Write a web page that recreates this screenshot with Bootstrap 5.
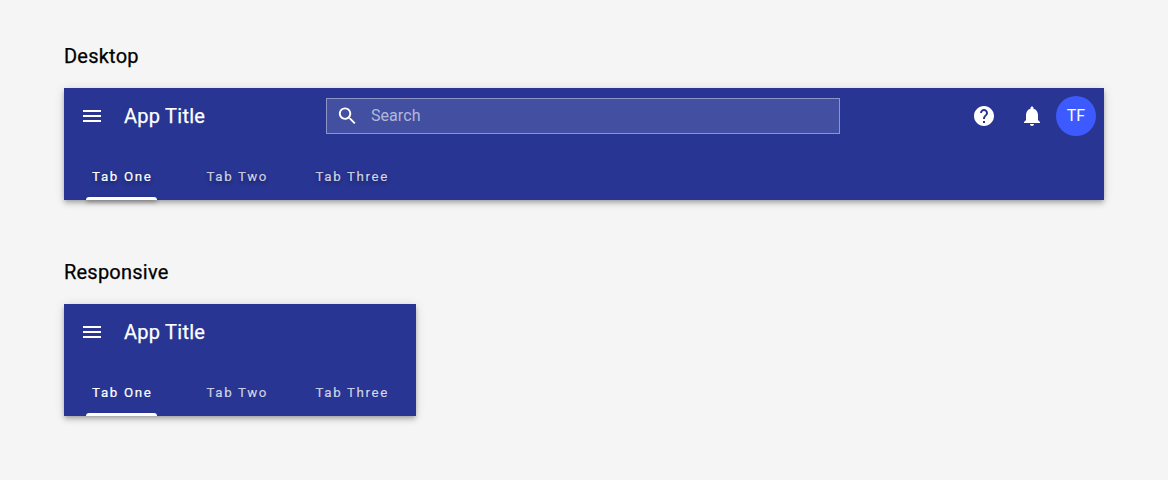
<!DOCTYPE html>
<html lang="en">
<head>
<meta charset="utf-8">
<title>App bars</title>
<link href="https://cdn.jsdelivr.net/npm/bootstrap@5.3.0/dist/css/bootstrap.min.css" rel="stylesheet">
<style>
body { background: #f5f5f5; font-family: Roboto, "Liberation Sans", sans-serif; padding: 40px 64px 0; }
.demo-heading { font-size: 20px; font-weight: 400; -webkit-text-stroke: .25px #000; letter-spacing: .22px; line-height: 32px; margin: 0 0 16px; color: #000; }
.app-bar { background: #283593; color: #fff; box-shadow: 0 2px 4px -1px rgba(0,0,0,.2), 0 4px 5px 0 rgba(0,0,0,.14), 0 1px 10px 0 rgba(0,0,0,.12); margin-bottom: 56px; }
.app-bar-narrow { width: 352px; }
.bar-row { height: 56px; padding: 0 8px 0 4px; }
.bar-left { width: 258px; }
.icon-btn { width: 48px; height: 48px; padding: 0; border: 0; background: none; color: #fff; }
.icon-btn svg, .search-box svg { width: 24px; height: 24px; fill: currentColor; display: block; }
.app-name { font-size: 20px; font-weight: 400; -webkit-text-stroke: .25px #fff; letter-spacing: .25px; margin-left: 8px; line-height: 1; }
.search-box { width: 514px; height: 36px; background: rgba(255,255,255,.13); border: 1px solid rgba(255,255,255,.4); padding-left: 9px; color: #fff; }
.search-field, .search-field:focus { background: none; border: 0; border-radius: 0; box-shadow: none; color: #fff; font-size: 16px; letter-spacing: .1px; padding: 0 0 2px 12px; height: 34px; }
.search-field::placeholder { color: rgba(255,255,255,.6); opacity: 1; }
.user-chip { width: 40px; height: 40px; background: #3d5afe; font-size: 16px; }
.tab-row { height: 56px; }
.tab-cell { width: 115px; height: 56px; color: rgba(255,255,255,.74); text-decoration: none; font-size: 13.3px; font-weight: 400; letter-spacing: 1.65px; -webkit-text-stroke: .2px currentColor; }
.tab-cell:hover { color: #fff; }
.tab-cell.is-active { color: #fff; }
.tab-label { display: inline-block; padding: 0 4.5px 0 6px; height: 56px; line-height: 65px; position: relative; }
.tab-cell.is-active .tab-label::after { content: ""; position: absolute; left: 0; right: 0; bottom: 0; height: 3px; background: #fff; border-radius: 3px 3px 0 0; }
.tabs-shaded .tab-label { text-shadow: 0 2px 4px rgba(0,0,0,.4); }
.tabs-shaded .is-active .tab-label::after { box-shadow: 0 2px 4px rgba(0,0,0,.35); }
</style>
</head>
<body>
<h2 class="demo-heading">Desktop</h2>
<header class="app-bar">
  <div class="bar-row d-flex align-items-center">
    <div class="bar-left d-flex align-items-center">
      <button class="icon-btn d-flex align-items-center justify-content-center" aria-label="Menu"><svg viewBox="0 0 24 24"><path d="M3 18h18v-2H3v2zm0-5h18v-2H3v2zm0-7v2h18V6H3z"/></svg></button>
      <span class="app-name">App Title</span>
    </div>
    <div class="search-box d-flex align-items-center">
      <svg viewBox="0 0 24 24"><path d="M15.5 14h-.79l-.28-.27C15.41 12.59 16 11.11 16 9.5 16 5.91 13.09 3 9.5 3S3 5.91 3 9.5 5.91 16 9.5 16c1.61 0 3.09-.59 4.23-1.57l.27.28v.79l5 4.99L20.49 19l-4.99-5zm-6 0C7.01 14 5 11.99 5 9.5S7.01 5 9.5 5 14 7.01 14 9.5 11.99 14 9.5 14z"/></svg>
      <input class="form-control search-field" type="text" placeholder="Search" aria-label="Search">
    </div>
    <div class="d-flex align-items-center ms-auto">
      <button class="icon-btn d-flex align-items-center justify-content-center" aria-label="Help"><svg viewBox="0 0 24 24"><path d="M12 2C6.48 2 2 6.48 2 12s4.48 10 10 10 10-4.48 10-10S17.52 2 12 2zm1 17h-2v-2h2v2zm2.07-7.75l-.9.92C13.45 12.9 13 13.5 13 15h-2v-.5c0-1.1.45-2.1 1.17-2.83l1.24-1.26c.37-.36.59-.86.59-1.41 0-1.1-.9-2-2-2s-2 .9-2 2H8c0-2.21 1.79-4 4-4s4 1.79 4 4c0 .88-.36 1.68-.93 2.25z"/></svg></button>
      <button class="icon-btn d-flex align-items-center justify-content-center" aria-label="Notifications"><svg viewBox="0 0 24 24"><path d="M12 22c1.1 0 2-.9 2-2h-4c0 1.1.89 2 2 2zm6-6v-5c0-3.07-1.64-5.64-4.5-6.32V4c0-.83-.67-1.5-1.5-1.5s-1.5.67-1.5 1.5v.68C7.63 5.36 6 7.92 6 11v5l-2 2v1h16v-1l-2-2z"/></svg></button>
      <div class="user-chip rounded-circle d-flex align-items-center justify-content-center">TF</div>
    </div>
  </div>
  <nav class="tab-row tabs-shaded d-flex">
    <a href="#" class="tab-cell is-active text-center"><span class="tab-label">Tab One</span></a>
    <a href="#" class="tab-cell text-center"><span class="tab-label">Tab Two</span></a>
    <a href="#" class="tab-cell text-center"><span class="tab-label">Tab Three</span></a>
  </nav>
</header>

<h2 class="demo-heading">Responsive</h2>
<header class="app-bar app-bar-narrow">
  <div class="bar-row d-flex align-items-center">
    <button class="icon-btn d-flex align-items-center justify-content-center" aria-label="Menu"><svg viewBox="0 0 24 24"><path d="M3 18h18v-2H3v2zm0-5h18v-2H3v2zm0-7v2h18V6H3z"/></svg></button>
    <span class="app-name">App Title</span>
  </div>
  <nav class="tab-row d-flex">
    <a href="#" class="tab-cell is-active text-center"><span class="tab-label">Tab One</span></a>
    <a href="#" class="tab-cell text-center"><span class="tab-label">Tab Two</span></a>
    <a href="#" class="tab-cell text-center"><span class="tab-label">Tab Three</span></a>
  </nav>
</header>
<script src="https://cdn.jsdelivr.net/npm/bootstrap@5.3.0/dist/js/bootstrap.bundle.min.js"></script>
</body>
</html>
